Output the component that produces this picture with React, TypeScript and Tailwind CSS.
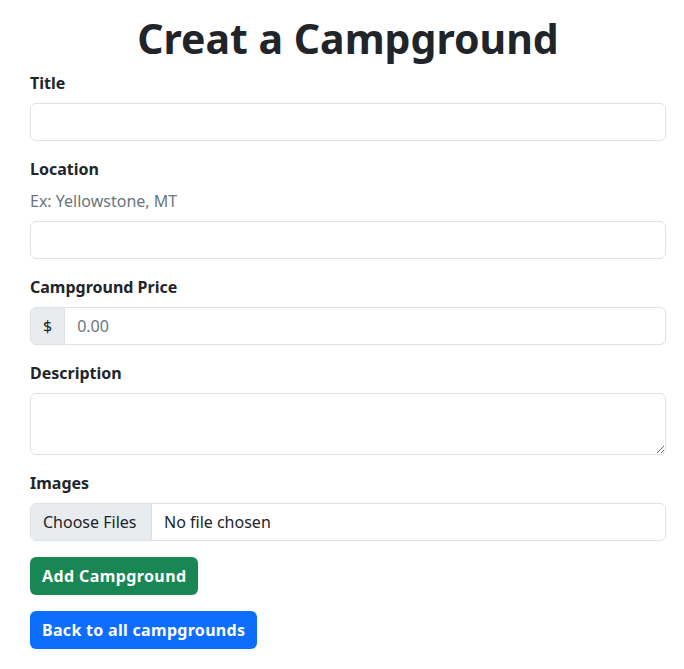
import React from 'react';

const font = { fontFamily: '"Noto Sans", "Open Sans", sans-serif' };

function Field({ label, children }: { label: string; children: React.ReactNode }): JSX.Element {
  return (
    <div className="mb-4">
      <label className="block mb-2 font-bold leading-6 text-[#212529]">{label}</label>
      {children}
    </div>
  );
}

const inputClass =
  'block w-full h-[38px] px-3 rounded-md border border-[#dee2e6] bg-white text-base text-[#212529] outline-none';

export default function App(): JSX.Element {
  return (
    <div className="min-h-screen bg-white text-[#212529]" style={font}>
      <div className="pl-[30px] pr-[18px]">
        <h1 className="text-center text-[41px] font-bold leading-[1.2] pt-[14px] mb-2">Creat a Campground</h1>
        <form onSubmit={(e) => e.preventDefault()}>
          <Field label="Title">
            <input type="text" className={inputClass} />
          </Field>

          <Field label="Location">
            <p className="mb-2 leading-6 text-[#6c757d]">Ex: Yellowstone, MT</p>
            <input type="text" className={inputClass} />
          </Field>

          <Field label="Campground Price">
            <div className="flex h-[38px]">
              <span className="flex items-center px-3 bg-[#e9ecef] border border-[#dee2e6] rounded-l-md">$</span>
              <input
                type="text"
                placeholder="0.00"
                className="flex-1 min-w-0 px-3 border border-l-0 border-[#dee2e6] rounded-r-md outline-none placeholder:text-[#6c757d]"
              />
            </div>
          </Field>

          <Field label="Description">
            <textarea rows={2} className="block w-full h-[62px] px-3 py-1.5 rounded-md border border-[#dee2e6] outline-none" />
          </Field>

          <Field label="Images">
            <div className="flex h-[38px] rounded-md border border-[#dee2e6] overflow-hidden">
              <span className="flex items-center w-[121px] px-3 bg-[#e9ecef] border-r border-[#dee2e6]">Choose Files</span>
              <span className="flex items-center px-3">No file chosen</span>
            </div>
          </Field>

          <div className="mb-4">
            <button type="submit" className="h-[38px] px-3 rounded-md bg-[#198754] text-white font-bold tracking-[0.4px]">
              Add Campground
            </button>
          </div>
        </form>
        <button className="h-[38px] px-3 rounded-md bg-[#0d6efd] text-white font-bold tracking-[0.3px]">
          Back to all campgrounds
        </button>
      </div>
    </div>
  );
}
